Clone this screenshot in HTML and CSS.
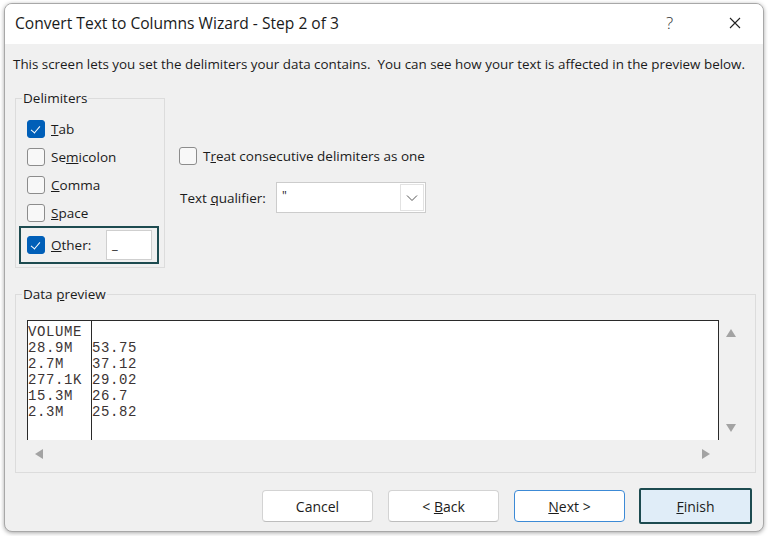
FILE: index.html
```html
<!DOCTYPE html>
<html>
<head>
<meta charset="utf-8">
<link rel="stylesheet" href="styles.css">
</head>
<body>
<div class="dialog">
  <div class="titlebar">
    <span class="title">Convert Text to Columns Wizard - Step 2 of 3</span>
    <span class="help">?</span>
    <span class="close"><svg width="12" height="12" viewBox="0 0 12 12"><path d="M1 1 L11 11 M11 1 L1 11" stroke="#222" stroke-width="1.1" fill="none"/></svg></span>
  </div>
  <div class="content">
    <p class="desc">This screen lets you set the delimiters your data contains.&nbsp; You can see how your text is affected in the preview below.</p>
    <div class="top">
      <fieldset class="group delims">
        <legend>Delimiters</legend>
        <div class="opt"><span class="cb checked"></span><span class="lbl"><u>T</u>ab</span></div>
        <div class="opt"><span class="cb"></span><span class="lbl">Se<u>m</u>icolon</span></div>
        <div class="opt"><span class="cb"></span><span class="lbl"><u>C</u>omma</span></div>
        <div class="opt"><span class="cb"></span><span class="lbl"><u>S</u>pace</span></div>
        <div class="opt other"><span class="cb checked"></span><span class="lbl"><u>O</u>ther:</span><span class="other-input">_</span></div>
      </fieldset>
      <div class="side">
        <div class="opt treat"><span class="cb"></span><span class="lbl">T<u>r</u>eat consecutive delimiters as one</span></div>
        <div class="qual">
          <span class="lbl">Text <u>q</u>ualifier:</span>
          <div class="combo"><span class="combo-val">"</span><span class="combo-btn"><svg width="12" height="8" viewBox="0 0 12 8"><path d="M1 1.5 L6 6.5 L11 1.5" stroke="#555" stroke-width="1" fill="none"/></svg></span></div>
        </div>
      </div>
    </div>
    <fieldset class="group preview">
      <legend>Data <u>p</u>review</legend>
      <div class="pgrid">
        <div class="pbox">
          <div class="col c1">VOLUME<br>28.9M<br>2.7M<br>277.1K<br>15.3M<br>2.3M</div>
          <div class="col c2">&nbsp;<br>53.75<br>37.12<br>29.02<br>26.7<br>25.82</div>
        </div>
        <div class="vscroll">
          <svg width="10" height="8" viewBox="0 0 10 8"><path d="M5 0 L10 8 L0 8 Z" fill="#a3a3a3"/></svg>
          <svg width="10" height="8" viewBox="0 0 10 8"><path d="M0 0 L10 0 L5 8 Z" fill="#a3a3a3"/></svg>
        </div>
        <div class="hscroll">
          <svg width="8" height="10" viewBox="0 0 8 10"><path d="M8 0 L8 10 L0 5 Z" fill="#a3a3a3"/></svg>
          <svg width="8" height="10" viewBox="0 0 8 10"><path d="M0 0 L8 5 L0 10 Z" fill="#a3a3a3"/></svg>
        </div>
      </div>
    </fieldset>
    <div class="buttons">
      <button class="btn">Cancel</button>
      <button class="btn">&lt; <u>B</u>ack</button>
      <button class="btn next"><u>N</u>ext &gt;</button>
      <button class="btn finish"><u>F</u>inish</button>
    </div>
  </div>
</div>
</body>
</html>
```

FILE: styles.css
```css
* { box-sizing: border-box; }
html, body { margin: 0; padding: 0; }
body {
  background: #ffffff;
  width: 768px;
  height: 536px;
  overflow: hidden;
  font-family: "Open Sans", "Noto Sans", sans-serif;
  color: #1b1b1b;
}
.dialog {
  margin: 3px 0 0 4px;
  width: 760px;
  height: 529px;
  border: 1px solid #a8a8a8;
  border-radius: 8px;
  background: #f0f0f0;
  box-shadow: 0 1px 4px rgba(0,0,0,0.35);
  overflow: hidden;
  display: flex;
  flex-direction: column;
}
.titlebar {
  height: 40px;
  background: #ffffff;
  display: flex;
  align-items: center;
  padding-left: 10px;
  flex: none;
}
.title {
  font-size: 15.6px;
  color: #1a1a1a;
  flex: 1;
  padding-bottom: 3px;
}
.help {
  font-size: 17px;
  font-weight: 300;
  color: #333;
  width: 30px;
  margin-right: 27px;
  padding-bottom: 3px;
}
.close {
  width: 40px;
  display: flex;
  justify-content: flex-start;
  padding-left: 6px;
  padding-bottom: 3px;
}
.content {
  flex: 1;
  padding: 0 8px 0 10px;
  display: flex;
  flex-direction: column;
}
.desc {
  margin: 11px 0 0 -2px;
  font-size: 13.4px;
  line-height: 18px;
  white-space: nowrap;
}
.top {
  display: flex;
  margin-top: 16px;
}
.group {
  margin: 0;
  border: 1px solid #dcdcdc;
  min-width: 0;
}
.group legend {
  font-size: 13.5px;
  line-height: 18px;
  padding: 0 1px;
  margin-left: -5px;
}
.delims {
  width: 150px;
  height: 179px;
  padding: 8px 0 0 11px;
  flex: none;
}
.opt {
  display: flex;
  align-items: center;
  height: 28px;
}
.cb {
  width: 18px;
  height: 18px;
  border: 1px solid #8c8c8c;
  border-radius: 3px;
  background: #f8f8f8;
  flex: none;
  position: relative;
}
.cb.checked {
  background: #005fb8;
  border-color: #005fb8;
}
.cb.checked::after {
  content: "";
  position: absolute;
  left: 5px;
  top: 3px;
  width: 4px;
  height: 8px;
  border: solid #ffffff;
  border-width: 0 1.3px 1.3px 0;
  transform: rotate(40deg);
}
.lbl {
  font-size: 13.5px;
  margin-left: 6px;
  white-space: nowrap;
}
.other {
  margin: -1px 0 0 -8px;
  width: 140px;
  height: 38px;
  border: 2px solid #1d4b50;
  padding-left: 6px;
}
.other .lbl { flex: 1; }
.other-input {
  width: 46px;
  height: 30px;
  background: #ffffff;
  border: 1px solid #cfcfcf;
  margin-right: 5px;
  font-size: 13px;
  padding: 4px 0 0 5px;
}
.side {
  margin-left: 14px;
  padding-top: 53px;
}
.treat { height: 28px; }
.qual {
  display: flex;
  align-items: center;
  margin-top: 12px;
}
.qual .lbl { margin-left: 1px; width: 96px; }
.combo {
  width: 150px;
  height: 31px;
  background: #ffffff;
  border: 1px solid #cccccc;
  display: flex;
}
.combo-val {
  flex: 1;
  font-size: 12px;
  padding: 4px 0 0 5px;
}
.combo-btn {
  width: 24px;
  margin: 1px;
  border: 1px solid #e2e2e2;
  display: flex;
  align-items: center;
  justify-content: center;
}
.preview {
  margin-top: 17px;
  width: 741px;
  height: 188px;
  padding: 17px 0 0 11px;
}
.pgrid {
  display: grid;
  grid-template-columns: 692px 35px;
  grid-template-rows: 120px 25px;
}
.pbox {
  background: #ffffff;
  border: 1px solid #2a2a2a;
  border-bottom: none;
  display: flex;
  font-family: "Liberation Mono", "Courier New", monospace;
  font-size: 14px;
  line-height: 16px;
  letter-spacing: 0.6px;
  color: #3b3434;
}
.col {
  padding-top: 3px;
  white-space: nowrap;
}
.c1 {
  width: 64px;
  border-right: 1px solid #2a2a2a;
}
.vscroll {
  display: flex;
  flex-direction: column;
  justify-content: space-between;
  align-items: flex-start;
  padding: 9px 0 8px 7px;
}
.hscroll {
  display: flex;
  justify-content: space-between;
  padding: 9px 9px 0 8px;
}
.buttons {
  display: flex;
  justify-content: flex-end;
  gap: 15px;
  margin-top: 17px;
  padding-right: 5px;
}
.btn {
  width: 111px;
  height: 32px;
  background: #ffffff;
  border: 1px solid #d3d3d3;
  border-bottom-color: #bdbdbd;
  border-radius: 4px;
  font-family: "Open Sans", "Noto Sans", sans-serif;
  font-size: 14px;
  color: #1b1b1b;
  padding: 0;
}
.next { border-color: #3c8ad6; }
.finish {
  background: #e0edf8;
  border: 2px solid #1d4b50;
  border-radius: 2px;
  width: 113px;
  height: 36px;
  margin: -2px -2px -2px -1px;
}
```
